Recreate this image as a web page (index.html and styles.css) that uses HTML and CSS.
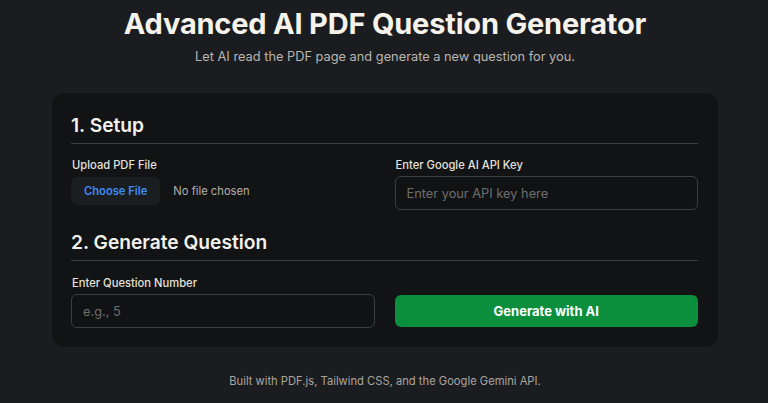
FILE: index.html
```html
<!DOCTYPE html>
<html lang="en">
<head>
<meta charset="utf-8">
<title>Advanced AI PDF Question Generator</title>
<link rel="stylesheet" href="styles.css">
</head>
<body>
<main class="page">
  <header class="hero">
    <h1 class="title">Advanced AI PDF Question Generator</h1>
    <p class="subtitle">Let AI read the PDF page and generate a new question for you.</p>
  </header>
  <section class="card">
    <h2 class="section-title">1. Setup</h2>
    <div class="grid grid-setup">
      <div class="field">
        <label class="label">Upload PDF File</label>
        <div class="file-row">
          <span class="file-btn">Choose File</span>
          <span class="file-text">No file chosen</span>
        </div>
      </div>
      <div class="field">
        <label class="label">Enter Google AI API Key</label>
        <input class="input" type="text" placeholder="Enter your API key here">
      </div>
    </div>
    <h2 class="section-title section-two">2. Generate Question</h2>
    <div class="grid grid-gen">
      <div class="field">
        <label class="label">Enter Question Number</label>
        <input class="input" type="text" placeholder="e.g., 5">
      </div>
      <div class="field">
        <button class="gen-btn" type="button">Generate with AI</button>
      </div>
    </div>
  </section>
  <footer class="footer">Built with PDF.js, Tailwind CSS, and the Google Gemini API.</footer>
</main>
</body>
</html>
```
FILE: styles.css
```css
* { box-sizing: border-box; }
html, body { margin: 0; padding: 0; }
body {
  background: #1b1c1f;
  font-family: Inter, "Noto Sans", sans-serif;
  color: #f1efe9;
  padding-left: 2px;
}
.page {
  width: 666px;
  margin: 0 auto;
  padding-top: 6px;
}
.hero { text-align: center; }
.title {
  margin: 0;
  font-size: 29px;
  line-height: 36px;
  font-weight: 700;
  color: #f6f3ec;
  letter-spacing: -0.2px;
}
.subtitle {
  margin: 5px 0 0;
  font-size: 12.8px;
  line-height: 20px;
  color: #b9b6b0;
}
.card {
  margin-top: 26px;
  background: #111315;
  border-radius: 12px;
  padding: 20px 20px 19px 19px;
}
.section-title {
  margin: 0;
  font-size: 19.2px;
  line-height: 24px;
  font-weight: 600;
  color: #f3f1ec;
  padding-bottom: 6px;
  border-bottom: 1px solid #3a3c3f;
}
.section-two { margin-top: 20px; }
.grid {
  display: grid;
  grid-template-columns: 1fr 1fr;
  column-gap: 20px;
  margin-top: 13px;
}
.grid-gen { margin-top: 14px; align-items: end; }
.field { display: flex; flex-direction: column; }
.label {
  font-size: 11.2px;
  line-height: 16px;
  font-weight: 500;
  color: #e4e1db;
  margin-bottom: 3px;
  padding-left: 1px;
}
.file-row {
  display: flex;
  align-items: center;
  gap: 13px;
  margin-top: 1px;
}
.file-btn {
  display: inline-block;
  height: 28px;
  line-height: 28px;
  padding: 0 13px;
  background: #1b1e21;
  border-radius: 6px;
  color: #3c8cf5;
  font-size: 11.2px;
  font-weight: 600;
}
.file-text {
  font-size: 11.2px;
  color: #b3b0aa;
}
.input {
  width: 100%;
  height: 34px;
  padding: 0 11px;
  border: 1px solid #3b3d40;
  border-radius: 6px;
  background: #111213;
  color: #eee;
  font-family: Inter, "Noto Sans", sans-serif;
  font-size: 12.8px;
  outline: none;
}
.input::placeholder { color: #6e6e6e; }
.gen-btn {
  width: 100%;
  height: 32px;
  border: none;
  border-radius: 6px;
  background: #0b8f3d;
  color: #ffffff;
  font-family: Inter, "Noto Sans", sans-serif;
  font-size: 13px;
  font-weight: 700;
  margin-bottom: 1px;
}
.footer {
  text-align: center;
  font-size: 11.2px;
  line-height: 16px;
  color: #a9a6a0;
  margin-top: 26px;
}
```
